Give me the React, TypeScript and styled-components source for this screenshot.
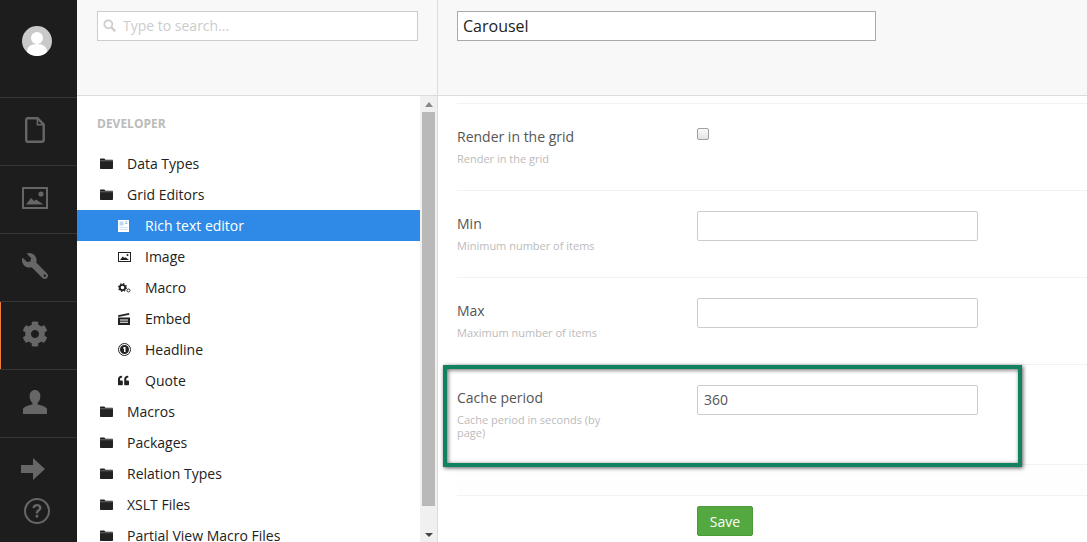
import styled, { createGlobalStyle } from "styled-components";
import { FaCog, FaQuoteLeft, FaWrench } from "react-icons/fa";

const GlobalStyle = createGlobalStyle`
  html, body {
    margin: 0;
    padding: 0;
    height: 542px;
    overflow: hidden;
    background: #fff;
    font-family: "Open Sans", "Liberation Sans", sans-serif;
  }
  * { box-sizing: border-box; }
`;

const FolderIcon = () => (
  <svg width="13" height="11" viewBox="0 0 13 11">
    <path d="M0 1.500c0-.6.4-1 1-1h3.400l1 1.200H12c.6 0 1 .4 1 1V10c0 .6-.4 1-1 1H1c-.6 0-1-.4-1-1z" fill="#222" />
    <rect x="0" y="2.400" width="13" height=".8" fill="#777" />
  </svg>
);

const DocIcon = () => (
  <svg width="20" height="26" viewBox="0 0 20 26">
    <path d="M2.500 1.200h10l6.200 6.400v15.200c0 1.100-.8 2-2 2H2.500c-.7 0-1.300-.9-1.300-2V3.200c0-1.100.6-2 1.300-2z" fill="none" stroke="#666" strokeWidth="2.400" />
    <path d="M12.400 1.500v6.200h6.200" fill="none" stroke="#666" strokeWidth="1.600" />
  </svg>
);

const PictureIcon = () => (
  <svg width="26" height="22" viewBox="0 0 26 22">
    <rect x="1" y="1" width="24" height="20" fill="none" stroke="#666" strokeWidth="2" />
    <circle cx="19" cy="7" r="2.600" fill="#666" />
    <path d="M4 17.500 9 11l3 3 2-1.400 7.500 4.900z" fill="#666" />
  </svg>
);

const UserIcon = () => (
  <svg width="24" height="24" viewBox="0 0 24 24">
    <path d="M12 0c3.200 0 5.400 2.700 5.400 6.200 0 2.800-1.200 5.300-2.800 6.600v1.600c3.600.6 8.900 2.300 9.400 4.600V24H0v-5c.5-2.300 5.800-4 9.400-4.600v-1.600C7.800 11.500 6.600 9 6.600 6.200 6.600 2.700 8.800 0 12 0z" fill="#666" />
  </svg>
);

const ArrowIcon = () => (
  <svg width="24" height="22" viewBox="0 0 24 22">
    <path d="M0 7h12V0l12 11-12 11v-7H0z" fill="#666" />
  </svg>
);

const HelpIcon = () => (
  <svg width="26" height="26" viewBox="0 0 26 26">
    <circle cx="13" cy="13" r="12" fill="none" stroke="#666" strokeWidth="2" />
    <path d="M8.500 10c0-2.700 2-4 4.500-4s4.500 1.400 4.500 3.700c0 3.200-3.300 3.200-3.300 5.900h-2.500c0-3.900 3.200-3.900 3.200-5.800 0-1-.8-1.600-1.900-1.600s-2 .7-2 1.800z" fill="#666" />
    <rect x="11.700" y="16.800" width="2.500" height="2.800" fill="#666" />
  </svg>
);

const AvatarIcon = () => (
  <svg width="30" height="30" viewBox="0 0 30 30">
    <circle cx="15" cy="15" r="15" fill="#c9c9c9" />
    <circle cx="15" cy="12" r="6" fill="#fff" />
    <path d="M5 26c0-5 3.500-8 10-8s10 3 10 8c-2.500 2.500-6 4-10 4s-7.500-1.500-10-4z" fill="#fff" />
  </svg>
);

const SearchIcon = () => (
  <svg width="13" height="13" viewBox="0 0 13 13">
    <circle cx="5.300" cy="5.300" r="4" fill="none" stroke="#ccc" strokeWidth="1.700" />
    <path d="m8.300 8.300 4 4" stroke="#ccc" strokeWidth="2.200" />
  </svg>
);

const RichTextIcon = () => (
  <svg width="11" height="12" viewBox="0 0 11 12">
    <rect width="11" height="12" fill="#fff" />
    <path d="M1.500 1.500h4v4h-4zM1.500 7h8v.8h-8zM1.500 9h8v.8h-8z" fill="#bcd8f5" />
    <path d="M7 1.500h2.500v.8H7zM7 3.200h2.500V4H7z" fill="#7fb4ec" />
  </svg>
);

const SmallImageIcon = () => (
  <svg width="13" height="10" viewBox="0 0 13 10">
    <rect x=".5" y=".5" width="12" height="9" fill="none" stroke="#222" />
    <circle cx="9.500" cy="3" r="1" fill="#222" />
    <path d="M2 8 4.800 4.500 6.500 6l1-.7L11 8z" fill="#222" />
  </svg>
);

const MacroIcon = () => (
  <svg width="13" height="10" viewBox="0 0 13 10">
    <circle cx="4.500" cy="4.500" r="2.700" fill="none" stroke="#222" strokeWidth="1.800" />
    <circle cx="4.500" cy="4.500" r="3.900" fill="none" stroke="#222" strokeWidth="1.200" strokeDasharray="1.500 1.560" />
    <circle cx="10.500" cy="7.500" r="1.500" fill="none" stroke="#333" strokeWidth="1" />
  </svg>
);

const EmbedIcon = () => (
  <svg width="12" height="12" viewBox="0 0 12 12">
    <path d="M0 2.200 11 0l.4 1.800L.4 4z" fill="#222" />
    <path d="M0 4.500h12V12H0z" fill="#222" />
    <path d="M2 6.500h8v.9H2zM2 8.800h8v.9H2z" fill="#fff" />
  </svg>
);

const HeadlineIcon = () => (
  <svg width="13" height="13" viewBox="0 0 13 13">
    <circle cx="6.500" cy="6.500" r="6" fill="none" stroke="#222" strokeWidth="1" />
    <circle cx="6.500" cy="6.500" r="4.500" fill="#222" />
    <path d="M6 4h1.500v5H6V5.300l-1 .4v-1z" fill="#fff" />
  </svg>
);

const treeItems = [
  { label: "Data Types", icon: <FolderIcon /> },
  { label: "Grid Editors", icon: <FolderIcon /> },
  { label: "Rich text editor", icon: <RichTextIcon />, child: true, selected: true },
  { label: "Image", icon: <SmallImageIcon />, child: true },
  { label: "Macro", icon: <MacroIcon />, child: true },
  { label: "Embed", icon: <EmbedIcon />, child: true },
  { label: "Headline", icon: <HeadlineIcon />, child: true },
  { label: "Quote", icon: <FaQuoteLeft size={11} color="#222" />, child: true },
  { label: "Macros", icon: <FolderIcon /> },
  { label: "Packages", icon: <FolderIcon /> },
  { label: "Relation Types", icon: <FolderIcon /> },
  { label: "XSLT Files", icon: <FolderIcon /> },
  { label: "Partial View Macro Files", icon: <FolderIcon /> },
];

const App = () => {
  return (
    <>
      <GlobalStyle />
      <Page>
        <Sidebar>
          <AvatarSlot>
            <AvatarIcon />
          </AvatarSlot>
          <NavItem>
            <DocIcon />
          </NavItem>
          <NavItem>
            <PictureIcon />
          </NavItem>
          <NavItem>
            <MirroredWrench size={26} color="#666" />
          </NavItem>
          <NavItem $active>
            <FaCog size={26} color="#666" />
          </NavItem>
          <NavItem>
            <UserIcon />
          </NavItem>
          <SidebarBottom>
            <ArrowSlot>
              <ArrowIcon />
            </ArrowSlot>
            <HelpSlot>
              <HelpIcon />
            </HelpSlot>
          </SidebarBottom>
        </Sidebar>

        <TreePanel>
          <PanelHeader>
            <SearchBox>
              <SearchIcon />
              <SearchPlaceholder>Type to search...</SearchPlaceholder>
            </SearchBox>
          </PanelHeader>
          <TreeBody>
            <TreeList>
              <TreeTitle>Developer</TreeTitle>
              {treeItems.map((item) => (
                <TreeRow key={item.label} $child={item.child} $selected={item.selected}>
                  <TreeIcon>{item.icon}</TreeIcon>
                  {item.label}
                </TreeRow>
              ))}
            </TreeList>
            <ScrollTrack>
              <ArrowUp />
              <ScrollThumb />
              <ArrowDown />
            </ScrollTrack>
          </TreeBody>
        </TreePanel>

        <Editor>
          <EditorHeader>
            <NameInput>Carousel</NameInput>
          </EditorHeader>
          <EditorBody>
            <FormRow>
              <LabelColumn>
                <FieldLabel>Render in the grid</FieldLabel>
                <FieldHint>Render in the grid</FieldHint>
              </LabelColumn>
              <Checkbox />
            </FormRow>
            <FormRow>
              <LabelColumn>
                <FieldLabel>Min</FieldLabel>
                <FieldHint>Minimum number of items</FieldHint>
              </LabelColumn>
              <TextField />
            </FormRow>
            <FormRow>
              <LabelColumn>
                <FieldLabel>Max</FieldLabel>
                <FieldHint>Maximum number of items</FieldHint>
              </LabelColumn>
              <TextField />
            </FormRow>
            <FormRow>
              <LabelColumn>
                <FieldLabel>Cache period</FieldLabel>
                <FieldHint>Cache period in seconds (by page)</FieldHint>
              </LabelColumn>
              <TextField>360</TextField>
              <Highlight />
            </FormRow>
            <EmptyRow />
            <Footer>
              <SaveButton>Save</SaveButton>
            </Footer>
          </EditorBody>
        </Editor>
      </Page>
    </>
  );
};

export default App;

const Page = styled.div`
  display: flex;
  width: 1087px;
  height: 542px;
  overflow: hidden;
`;

const Sidebar = styled.div`
  width: 77px;
  flex: none;
  display: flex;
  flex-direction: column;
  background: #1d1d1d;
`;

const AvatarSlot = styled.div`
  height: 97px;
  padding: 26px 0 0 22px;
`;

const NavItem = styled.div<{ $active?: boolean }>`
  height: 68px;
  display: flex;
  align-items: center;
  justify-content: center;
  padding: 0 7px 4px 0;
  border-top: 1px solid #343434;
  box-shadow: ${(p) => (p.$active ? "inset 1px 0 0 #f5793b" : "none")};
`;

const MirroredWrench = styled(FaWrench)`
  transform: scaleX(-1);
`;

const SidebarBottom = styled.div`
  flex: 1;
  border-top: 1px solid #343434;
  display: flex;
  flex-direction: column;
`;

const ArrowSlot = styled.div`
  padding: 20px 0 0 21px;
  height: 60px;
`;

const HelpSlot = styled.div`
  padding-left: 24px;
`;

const TreePanel = styled.div`
  width: 361px;
  flex: none;
  display: flex;
  flex-direction: column;
  border-right: 1px solid #dcdcdc;
`;

const PanelHeader = styled.div`
  height: 96px;
  flex: none;
  padding: 11px 0 0 20px;
  background: #f8f8f8;
  border-bottom: 1px solid #dcdcdc;
`;

const SearchBox = styled.div`
  width: 321px;
  height: 30px;
  display: flex;
  align-items: center;
  gap: 7px;
  padding: 0 0 2px 5px;
  background: #fff;
  border: 1px solid #ccc;
`;

const SearchPlaceholder = styled.span`
  font-size: 14px;
  color: #ccc;
`;

const TreeBody = styled.div`
  flex: 1;
  display: flex;
  min-height: 0;
`;

const TreeList = styled.div`
  width: 343px;
  flex: none;
  overflow: hidden;
`;

const TreeTitle = styled.div`
  height: 52px;
  padding: 20px 0 0 20px;
  font-size: 12px;
  line-height: 16px;
  font-weight: 700;
  text-transform: uppercase;
  color: #bbb;
`;

const TreeRow = styled.div<{ $child?: boolean; $selected?: boolean }>`
  height: 31px;
  display: flex;
  align-items: center;
  padding-left: ${(p) => (p.$child ? "41px" : "23px")};
  font-size: 14px;
  color: ${(p) => (p.$selected ? "#fff" : "#222")};
  background: ${(p) => (p.$selected ? "#2e8ae6" : "transparent")};
`;

const TreeIcon = styled.span`
  width: 27px;
  flex: none;
  display: flex;
  align-items: center;
`;

const ScrollTrack = styled.div`
  width: 17px;
  flex: none;
  display: flex;
  flex-direction: column;
  align-items: center;
  background: #f0f0f0;
`;

const ArrowUp = styled.div`
  margin: 6px 0 5px;
  border-left: 4px solid transparent;
  border-right: 4px solid transparent;
  border-bottom: 5px solid #888;
`;

const ArrowDown = styled.div`
  margin-top: 27px;
  border-left: 4px solid transparent;
  border-right: 4px solid transparent;
  border-top: 4px solid #444;
`;

const ScrollThumb = styled.div`
  width: 13px;
  height: 394px;
  flex: none;
  margin-left: -1px;
  background: #b9b9b9;
`;

const Editor = styled.div`
  flex: 1;
  display: flex;
  flex-direction: column;
  min-width: 0;
`;

const EditorHeader = styled.div`
  height: 96px;
  flex: none;
  padding: 11px 0 0 19px;
  background: #f8f8f8;
  border-bottom: 1px solid #dcdcdc;
`;

const NameInput = styled.div`
  width: 419px;
  height: 30px;
  padding-left: 5px;
  font-size: 16px;
  line-height: 28px;
  color: #222;
  background: #fff;
  border: 1px solid #aaa;
`;

const EditorBody = styled.div`
  flex: 1;
  padding: 7px 0 0 19px;
  background: #fff;
`;

const FormRow = styled.div`
  position: relative;
  display: flex;
  align-items: flex-start;
  padding: 20px 0 25px;
  border-top: 1px solid #f2f2f2;
`;

const EmptyRow = styled.div`
  height: 32px;
  background: #fefefe;
  border-top: 1px solid #f2f2f2;
  border-bottom: 1px solid #f2f2f2;
`;

const LabelColumn = styled.div`
  width: 240px;
  flex: none;
  padding: 3px 80px 0 0;
`;

const FieldLabel = styled.div`
  font-size: 14px;
  line-height: 20px;
  color: #555;
`;

const FieldHint = styled.div`
  margin-top: 5px;
  font-size: 11px;
  line-height: 13px;
  color: #bbb;
`;

const TextField = styled.div`
  width: 281px;
  height: 30px;
  padding-left: 6px;
  font-size: 14px;
  line-height: 28px;
  color: #555;
  background: #fff;
  border: 1px solid #ccc;
  border-radius: 2px;
`;

const Checkbox = styled.div`
  width: 12px;
  height: 12px;
  margin-top: 4px;
  background: linear-gradient(#fafafa, #e4e4e4);
  border: 1px solid #a0a0a0;
  border-radius: 2px;
`;

const Highlight = styled.div`
  position: absolute;
  top: 0;
  left: -14px;
  width: 579px;
  height: 102px;
  border: 4px solid #12815f;
  box-shadow: 1px 1px 4px rgba(0, 0, 0, 0.65), inset 1px 1px 4px rgba(0, 0, 0, 0.6);
  pointer-events: none;
`;

const Footer = styled.div`
  padding-top: 10px;
  padding-left: 240px;
`;

const SaveButton = styled.div`
  width: 56px;
  height: 30px;
  display: flex;
  align-items: center;
  justify-content: center;
  font-size: 14px;
  color: #fff;
  background: #53a93f;
  border: 1px solid #4a9a39;
  border-radius: 2px;
`;
